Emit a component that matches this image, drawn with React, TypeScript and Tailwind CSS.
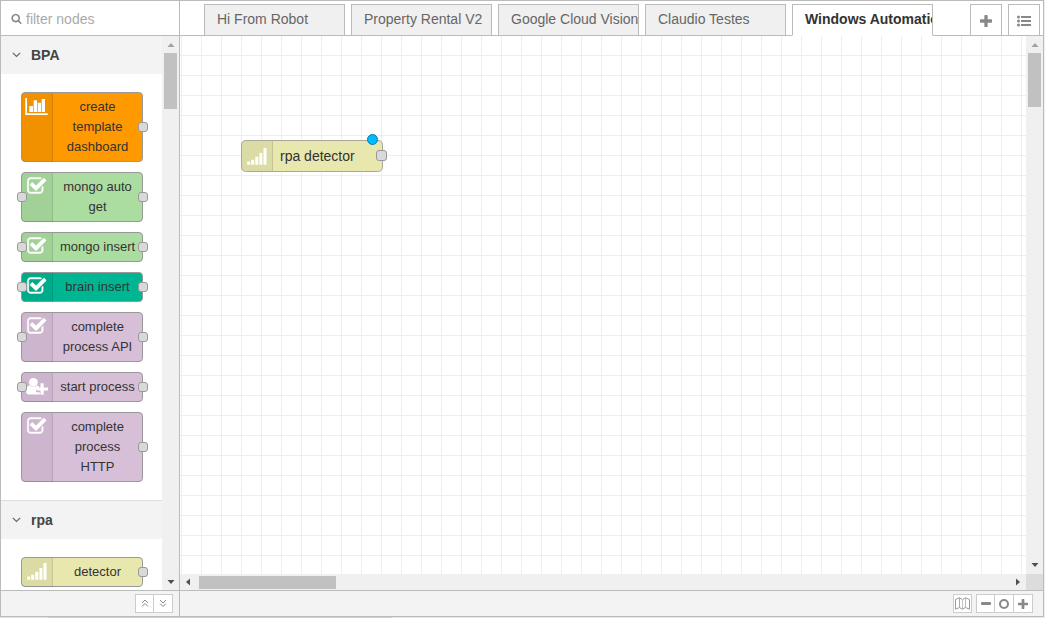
import type { ReactNode } from "react";

type IconName = "chart" | "check" | "user" | "signal";

function Search() {
  return (
    <svg viewBox="0 0 1792 1792" className="h-[11px] w-[11px] shrink-0 fill-[#888]">
      <path d="M1216 832q0-185-131.5-316.5t-316.5-131.5-316.5 131.5-131.5 316.5 131.5 316.5 316.5 131.5 316.5-131.5 131.5-316.5zm512 832q0 52-38 90t-90 38q-54 0-90-38l-343-342q-179 124-399 124-143 0-273.5-55.5t-225-150-150-225-55.5-273.5 55.5-273.5 150-225 225-150 273.5-55.5 273.5 55.5 225 150 150 225 55.5 273.5q0 220-124 399l343 343q37 37 37 90z" />
    </svg>
  );
}

function Plus({ className }: { className: string }) {
  return (
    <svg viewBox="192 128 1408 1408" className={className}>
      <path d="M1600 736v192q0 40-28 68t-68 28h-416v416q0 40-28 68t-68 28h-192q-40 0-68-28t-28-68v-416h-416q-40 0-68-28t-28-68v-192q0-40 28-68t68-28h416v-416q0-40 28-68t68-28h192q40 0 68 28t28 68v416h416q40 0 68 28t28 68z" />
    </svg>
  );
}

function NodeIcon({ name }: { name: IconName }) {
  if (name === "chart")
    return (
      <svg viewBox="0 0 30 30" className="block h-[30px] w-[30px] fill-white">
        <path d="M3.300 6H5v15.200h20.700v1.700H3.300zM7.300 14H11v6H7.300zM11.700 8.300H15V20h-3.300zM15.700 10.700H19V20h-3.300zM19.700 7H23v13h-3.300z" />
      </svg>
    );
  if (name === "check")
    return (
      <svg viewBox="0 0 30 30" className="block h-[30px] w-[30px] fill-white">
        <path
          className="stroke-white stroke-[40]"
          transform="translate(4.600 4.100) scale(.01125)"
          d="M1472 930v318q0 119-84.5 203.5t-203.5 84.5h-832q-119 0-203.5-84.5t-84.5-203.5v-832q0-119 84.5-203.5t203.5-84.5h832q63 0 117 25 15 7 18 23 3 17-9 29l-49 49q-10 10-23 10-3 0-9-2-23-6-45-6h-832q-66 0-113 47t-47 113v832q0 66 47 113t113 47h832q66 0 113-47t47-113v-254q0-13 9-22l64-64q10-10 23-10 6 0 12 3 20 8 20 29zm231-489l-814 814q-24 24-57 24t-57-24l-430-430q-24-24-24-57t24-57l110-110q24-24 57-24t57 24l263 263 647-647q24-24 57-24t57 24l110 110q24 24 24 57t-24 57z"
        />
      </svg>
    );
  if (name === "user")
    return (
      <svg viewBox="0 0 30 30" className="block h-[30px] w-[30px] fill-white">
        <circle cx="11.400" cy="10.300" r="4.400" />
        <path d="M7.500 13.500q3.900 3 7.800 0 1.200.2 2 1.500h-.3v1.200h-3v4h3.800v2.200H6.500Q4 22.400 4 20q0-6.200 3.500-6.500z" />
        <path d="M18.500 11.200h3.200v4.200H26v3.200h-4.300v4.200h-3.200v-4.200h-4.200v-3.200h4.200z" />
      </svg>
    );
  return (
    <svg viewBox="0 0 30 30" className="block h-[30px] w-[30px] fill-white">
      <path d="M5.200 19.500h3v3.200h-3zM9.200 17.700h3v5h-3zM13.300 14.800h3v7.900h-3zM17.400 11h3v11.700h-3zM21.500 6h3v16.700h-3z" />
    </svg>
  );
}

function Port({ className }: { className: string }) {
  return <span className={`absolute h-[10px] w-[10px] rounded-[3px] border border-[#999] bg-[#d9d9d9] ${className}`} />;
}

function PaletteNode({ lines, icon, color, input }: { lines: string[]; icon: IconName; color: string; input?: boolean }) {
  return (
    <div className={`relative flex w-[122px] shrink-0 rounded-[4px] border border-[#999] ${color}`}>
      <div className="-mb-px w-[31px] shrink-0 rounded-l-[3px] border-r border-black/10 bg-black/5">
        <div className="-mt-px h-[28px]">
          <NodeIcon name={icon} />
        </div>
      </div>
      <div className="flex-1 py-1 text-center text-[13px] leading-[20px] whitespace-nowrap text-[#333]">
        {lines.map((l) => (
          <div key={l}>{l}</div>
        ))}
      </div>
      {input && <Port className="top-1/2 -left-[5px] -mt-[5px]" />}
      <Port className="top-1/2 -right-[6px] -mt-[5px]" />
    </div>
  );
}

function CategoryHeader({ children }: { children: ReactNode }) {
  return (
    <div className="flex h-[38px] shrink-0 items-center bg-[#f3f3f3] pl-[11px] text-[14px] font-bold text-[#444]">
      <svg viewBox="0 0 9 6" className="mr-[10px] h-[6px] w-[9px] fill-none stroke-[#666] stroke-[1.200]">
        <path d="M.8.8 4.500 4.500 8.200.8" />
      </svg>
      {children}
    </div>
  );
}

const purple = "bg-[#d8bfd8]";
const nodes: { lines: string[]; icon: IconName; color: string; input?: boolean }[] = [
  { lines: ["create", "template", "dashboard"], icon: "chart", color: "bg-[#ff9900]" },
  { lines: ["mongo auto", "get"], icon: "check", color: "bg-[#aadd9f]", input: true },
  { lines: ["mongo insert"], icon: "check", color: "bg-[#aadd9f]", input: true },
  { lines: ["brain insert"], icon: "check", color: "bg-[#00b592]", input: true },
  { lines: ["complete", "process API"], icon: "check", color: purple, input: true },
  { lines: ["start process"], icon: "user", color: purple, input: true },
  { lines: ["complete", "process", "HTTP"], icon: "check", color: purple },
];

function Arrow({ d, className }: { d: string; className: string }) {
  return (
    <svg viewBox="0 0 8 8" className={`h-2 w-2 shrink-0 ${className}`}>
      <path d={d} />
    </svg>
  );
}

const up = "M.5 6h7L4 2z";
const down = "M.5 2h7L4 6z";

function VerticalBar({ thumb, className }: { thumb: string; className: string }) {
  return (
    <div className={`flex w-[17px] shrink-0 flex-col items-center bg-[#f0f0f0] ${className}`}>
      <div className="flex h-[17px] items-center">
        <Arrow d={up} className="fill-[#a0a0a0]" />
      </div>
      <div className={`w-[13px] bg-[#c1c1c1] ${thumb}`} />
      <div className="mt-auto flex h-[17px] items-center">
        <Arrow d={down} className="fill-[#505050]" />
      </div>
    </div>
  );
}

function Palette() {
  return (
    <aside className="flex w-[179px] shrink-0 flex-col border-r border-[#bbb]">
      <div className="flex h-[35px] shrink-0 items-center gap-[4px] border-b border-[#bbb] pl-[10px] text-[14px] text-[#aaa]">
        <Search />
        <span className="pt-[3px]">filter nodes</span>
      </div>
      <div className="flex min-h-0 flex-1">
        <div className="flex flex-1 flex-col overflow-hidden">
          <CategoryHeader>BPA</CategoryHeader>
          <div className="flex shrink-0 flex-col gap-[10px] pt-[18px] pb-[18px] pl-5">
            {nodes.map((n) => (
              <PaletteNode key={n.lines.join(" ")} {...n} />
            ))}
          </div>
          <div className="shrink-0 border-t border-[#ddd]">
            <CategoryHeader>rpa</CategoryHeader>
          </div>
          <div className="shrink-0 pt-[18px] pl-5">
            <PaletteNode lines={["detector"]} icon="signal" color="bg-[#e7e7ae]" />
          </div>
        </div>
        <VerticalBar thumb="h-[56px]" className="" />
      </div>
      <div className="flex h-[26px] shrink-0 items-center justify-end border-t border-[#bbb] bg-[#f3f3f3] pr-[6px]">
        <div className="flex h-[19px] w-[38px] border border-[#ccc] bg-white">
          {["M1 4 4 1l3 3M1 7.500l3-3 3 3", "M1 1l3 3 3-3M1 4.500l3 3 3-3"].map((d) => (
            <div key={d} className="flex w-[18px] items-center justify-center first:border-r first:border-[#ccc]">
              <svg viewBox="0 0 8 9" className="h-[9px] w-[8px] fill-none stroke-[#888]">
                <path d={d} />
              </svg>
            </div>
          ))}
        </div>
      </div>
    </aside>
  );
}

function Tab({ children, active }: { children: ReactNode; active?: boolean }) {
  return (
    <div
      className={`w-[141px] shrink-0 overflow-hidden border border-[#bbb] pl-3 text-[14px] leading-[29px] whitespace-nowrap ${
        active ? "h-[32px] border-b-white bg-white font-bold text-[#333]" : "h-[32px] bg-[#f0f0f0] text-[#666]"
      }`}
    >
      {children}
    </div>
  );
}

function Workspace() {
  return (
    <main className="flex min-w-0 flex-1 flex-col">
      <div className="flex h-[35px] shrink-0 bg-[linear-gradient(#bbb,#bbb)] bg-[length:100%_1px] bg-bottom bg-no-repeat pt-[3px] pr-[3px] pl-[24px]">
        <div className="flex gap-[6px]">
          <Tab>Hi From Robot</Tab>
          <Tab>Property Rental V2</Tab>
          <Tab>Google Cloud Vision</Tab>
          <Tab>Claudio Testes</Tab>
          <Tab active>Windows Automation</Tab>
        </div>
        <div className="ml-auto flex gap-[6px]">
          <div className="flex h-[32px] w-[32px] items-center justify-center border border-[#bbb] bg-white pt-px">
            <Plus className="h-[12px] w-[12px] fill-[#888]" />
          </div>
          <div className="flex h-[32px] w-[32px] items-center justify-center border border-[#bbb] bg-white pt-[2px]">
            <svg viewBox="0 0 14 12" className="h-[12px] w-[14px] fill-[#888]">
              <path d="M4 1h10v2H4zM4 5h10v2H4zM4 9h10v2H4z" />
              <circle cx="1.500" cy="2" r="1.500" />
              <circle cx="1.500" cy="6" r="1.500" />
              <circle cx="1.500" cy="10" r="1.500" />
            </svg>
          </div>
        </div>
      </div>
      <div className="flex min-h-0 flex-1">
        <div className="relative flex-1 overflow-hidden bg-white bg-[linear-gradient(to_right,#eee_1px,transparent_1px),linear-gradient(#eee_1px,transparent_1px)] bg-[length:20px_20px] bg-[position:1px_19px]">
          <div className="absolute top-[104px] left-[61px] flex h-[32px] w-[142px] rounded-[5px] border-[1.500px] border-[#999]/80 bg-[#e7e7ae]">
            <div className="w-[31px] shrink-0 rounded-l-[4px] border-r border-black/10 bg-black/5 pt-px">
              <NodeIcon name="signal" />
            </div>
            <span className="pl-[7px] text-[14px] leading-[31px] text-[#333]">rpa detector</span>
            <Port className="top-[9px] -right-[5px] !h-[11px] !w-[11px]" />
            <span className="absolute -top-[7px] right-[4px] h-[11px] w-[11px] rounded-full border border-[#0080b4] bg-[#00bcff]" />
          </div>
        </div>
        <VerticalBar thumb="h-[54px]" className="pb-px" />
      </div>
      <div className="flex h-[16px] shrink-0">
        <div className="flex flex-1 items-center bg-[#f0f0f0]">
          <Arrow d="M6 .5v7L2 4z" className="mr-[7px] ml-[4px] fill-[#505050]" />
          <div className="h-[13px] w-[137px] bg-[#c1c1c1]" />
          <Arrow d="M2 .5v7L6 4z" className="mr-[4px] ml-auto fill-[#505050]" />
        </div>
        <div className="w-[17px] bg-[#dcdcdc]" />
      </div>
      <div className="flex h-[26px] shrink-0 items-center justify-end gap-[4px] border-t border-[#bbb] bg-[#f3f3f3] pr-[10px]">
        <div className="flex h-[19px] w-[19px] items-center justify-center border border-[#ccc] bg-white">
          <svg viewBox="0 0 15 13" className="h-[13px] w-[15px] fill-none">
            <path d="M.5 2.500 4.500.8l3 1.700 3-1.700 4 1.700v9.700l-4-1.700-3 1.700-3-1.700-4 1.700z" className="stroke-[#999]" />
            <path d="M4.500 1v9.500" className="stroke-[#aaa]" />
            <path d="M10.500 1v9.500" className="stroke-[#e5a999]" />
            <path d="M7.500 2.500V12" className="stroke-[#c9c2bd]" />
          </svg>
        </div>
        <div className="flex h-[19px] w-[57px] border border-[#ccc] bg-white">
          <div className="flex w-[18px] items-center justify-center border-r border-[#ccc]">
            <div className="h-[3px] w-[10px] rounded-[1px] bg-[#888]" />
          </div>
          <div className="flex w-[19px] items-center justify-center border-r border-[#ccc]">
            <div className="h-[10px] w-[10px] rounded-full border-2 border-[#888]" />
          </div>
          <div className="flex flex-1 items-center justify-center">
            <Plus className="h-[10px] w-[10px] fill-[#888]" />
          </div>
        </div>
      </div>
    </main>
  );
}

export default function App() {
  return (
    <div className="h-[618px] w-[1045px] overflow-hidden bg-[#eef0f0] font-['Liberation_Sans',Arial,sans-serif]">
      <div className="flex h-[617px] w-[1044px] border border-[#bbb] bg-white">
        <Palette />
        <Workspace />
      </div>
      <div className="flex h-px">
        <div className="w-[48px] bg-[#e3e1ea]" />
        <div className="w-[344px] bg-[#cfcfcf]" />
        <div className="flex-1 bg-[#dfe9e8]" />
      </div>
    </div>
  );
}
